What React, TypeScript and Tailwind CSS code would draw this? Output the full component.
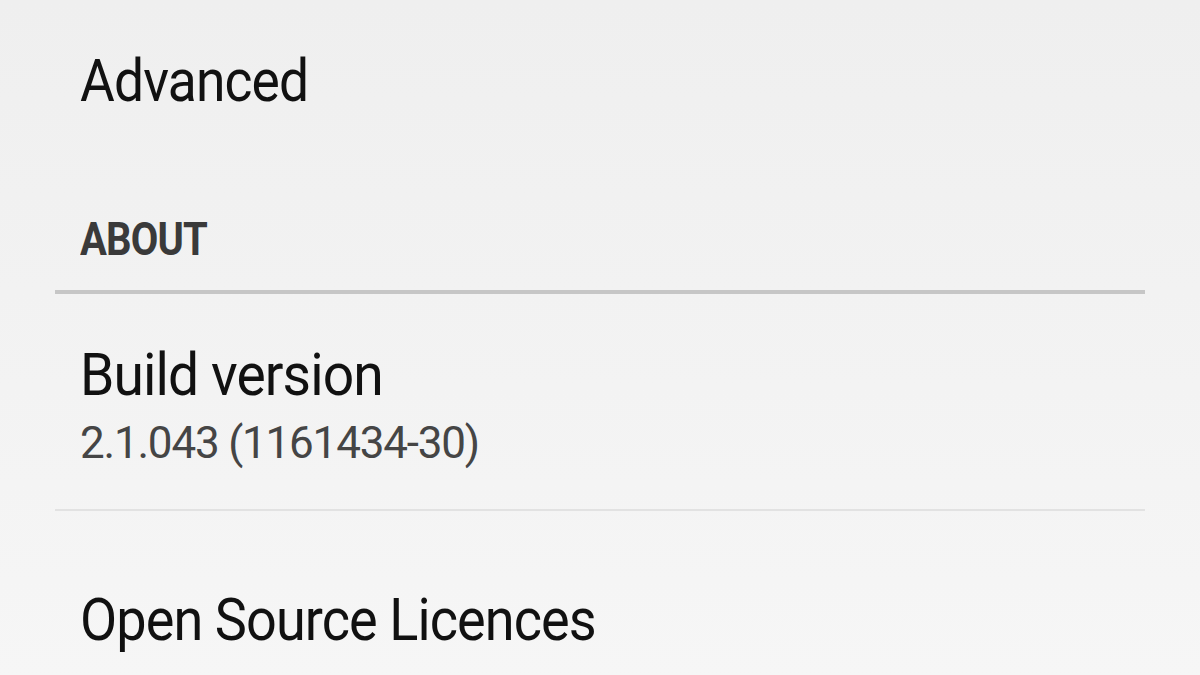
import React from "react";

const font = { fontFamily: "Roboto, 'Noto Sans', sans-serif" };

export default function App() {
  return (
    <div
      className="w-[1200px] h-[675px] overflow-hidden bg-gradient-to-b from-[#efefef] to-[#f6f6f6] text-[#111]"
      style={font}
    >
      <div className="px-[55px]">
        <div className="h-[160px] pt-[46px] px-[25px]">
          <div className="text-[60px] leading-[70px] tracking-[-1px] origin-left scale-x-[0.89]">Advanced</div>
        </div>
        <div className="h-[130px] flex items-end pb-[26px] px-[25px]">
          <div className="text-[46px] leading-[50px] font-bold text-[#3a3a3a] tracking-[-1px] origin-left scale-x-[0.87]">ABOUT</div>
        </div>
        <div className="h-[4px] bg-[#c6c6c6]" />
        <div className="h-[215px] pt-[46px] px-[25px]">
          <div className="text-[60px] leading-[70px] tracking-[-1px] origin-left scale-x-[0.92]">Build version</div>
          <div className="mt-[6px] text-[44px] leading-[54px] text-[#454545] tracking-[-1.2px]">2.1.043 (1161434-30)</div>
        </div>
        <div className="h-[2px] bg-[#e2e2e2]" />
        <div className="pt-[74px] px-[25px]">
          <div className="text-[60px] leading-[70px] tracking-[-1px] origin-left scale-x-[0.9]">Open Source Licences</div>
        </div>
      </div>
    </div>
  );
}
